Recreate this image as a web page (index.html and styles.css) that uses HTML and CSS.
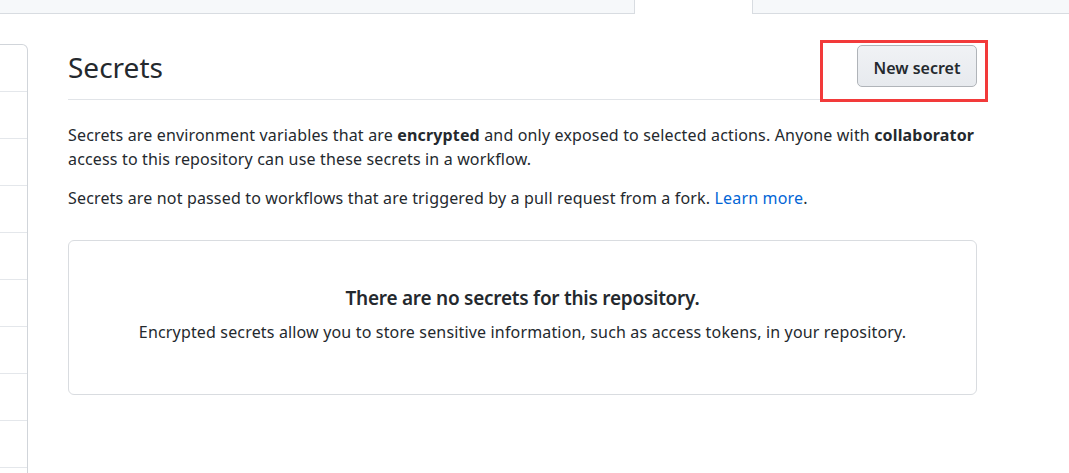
FILE: index.html
```html
<!DOCTYPE html>
<html lang="en">
<head>
<meta charset="utf-8">
<title>Secrets</title>
<link rel="stylesheet" href="styles.css">
</head>
<body>
  <nav class="tabbar">
    <div class="tab-rest tab-left"></div>
    <div class="tab-active"></div>
    <div class="tab-rest tab-right"></div>
  </nav>
  <div class="layout">
    <aside class="sidebar">
      <div class="side-row"></div>
      <div class="side-row"></div>
      <div class="side-row"></div>
      <div class="side-row"></div>
      <div class="side-row"></div>
      <div class="side-row"></div>
      <div class="side-row"></div>
      <div class="side-row"></div>
      <div class="side-row"></div>
    </aside>
    <main class="main">
      <header class="subhead">
        <h2 class="subhead-title">Secrets</h2>
        <div class="btn-wrap">
          <button class="btn" type="button">New secret</button>
          <span class="annot"></span>
        </div>
      </header>
      <p class="text p1">Secrets are environment variables that are <strong>encrypted</strong> and only exposed to selected actions. Anyone with <strong>collaborator</strong> access to this repository can use these secrets in a workflow.</p>
      <p class="text p2">Secrets are not passed to workflows that are triggered by a pull request from a fork. <a class="link" href="#">Learn more</a>.</p>
      <section class="blankslate">
        <h3 class="blank-title">There are no secrets for this repository.</h3>
        <p class="blank-text">Encrypted secrets allow you to store sensitive information, such as access tokens, in your repository.</p>
      </section>
    </main>
  </div>
</body>
</html>
```
FILE: styles.css
```css
* { box-sizing: border-box; }
html, body { margin: 0; padding: 0; background: #fff; }
body {
  font-family: "Noto Sans", "Open Sans", sans-serif;
  color: #24292e;
  font-size: 16px;
  line-height: 24px;
  height: 473px;
  overflow: hidden;
}

.tabbar { display: flex; height: 14px; }
.tab-rest { background: #f6f8fa; border-bottom: 1px solid #d8dce1; }
.tab-left { width: 635px; border-right: 1px solid #d8dce1; }
.tab-active { width: 117px; background: #fff; }
.tab-right { flex: 1; border-left: 1px solid #d8dce1; }

.layout { display: flex; gap: 40px; margin-top: 30px; }

.sidebar {
  width: 28px;
  flex: none;
  border: 1px solid #d1d5da;
  border-left: none;
  border-top-right-radius: 6px;
  height: 440px;
}
.side-row { height: 47px; border-bottom: 1px solid #e4e7eb; }

.main { width: 909px; flex: none; }

.subhead {
  display: flex;
  align-items: center;
  justify-content: space-between;
  padding: 1px 0 12px;
  border-bottom: 1px solid #e1e4e8;
}
.subhead-title {
  margin: 2px 0 0;
  font-size: 28px;
  font-weight: 400;
  line-height: 40px;
}
.btn-wrap { position: relative; }
.btn {
  display: block;
  width: 120px;
  height: 42px;
  font-family: inherit;
  font-size: 16px;
  font-weight: 600;
  color: #24292e;
  background: linear-gradient(#f0f2f5, #e7eaee);
  border: 1px solid #b0b4b9;
  border-radius: 5px;
  padding: 3px 0 0;
}
.annot {
  position: absolute;
  left: -37px;
  right: -11px;
  top: -5px;
  bottom: -15px;
  border: 3px solid #f23a3a;
  pointer-events: none;
}

.text { margin: 0; letter-spacing: 0.16px; }
.p1 { margin-top: 23px; }
.p2 { margin-top: 15px; }
.link { color: #0366d6; text-decoration: none; }

.blankslate {
  margin-top: 30px;
  border: 1px solid #d9dce0;
  border-radius: 6px;
  height: 155px;
  padding-top: 42px;
  text-align: center;
}
.blank-title {
  margin: 0;
  font-size: 19px;
  font-weight: 600;
  line-height: 30px;
  letter-spacing: -0.25px;
}
.blank-text { margin: 7px 0 0; letter-spacing: 0.16px; }
```
